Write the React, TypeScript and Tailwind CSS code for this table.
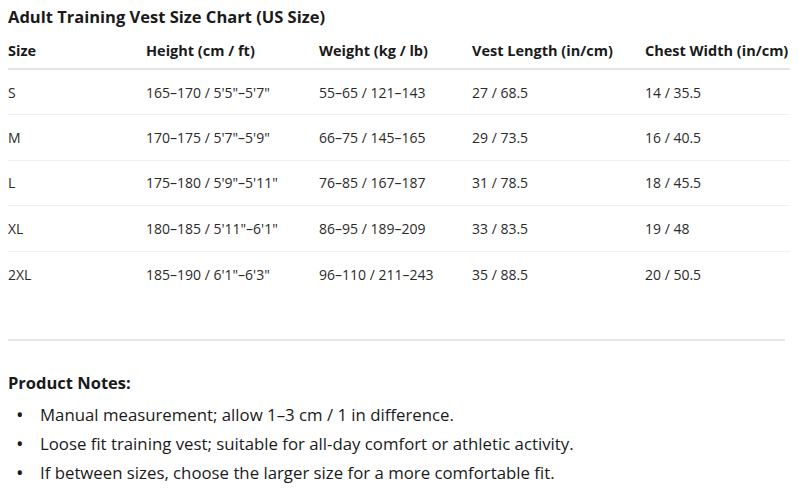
import React from "react";

const rows = [
  ["S", "165–170 / 5'5\"–5'7\"", "55–65 / 121–143", "27 / 68.5", "14 / 35.5"],
  ["M", "170–175 / 5'7\"–5'9\"", "66–75 / 145–165", "29 / 73.5", "16 / 40.5"],
  ["L", "175–180 / 5'9\"–5'11\"", "76–85 / 167–187", "31 / 78.5", "18 / 45.5"],
  ["XL", "180–185 / 5'11\"–6'1\"", "86–95 / 189–209", "33 / 83.5", "19 / 48"],
  ["2XL", "185–190 / 6'1\"–6'3\"", "96–110 / 211–243", "35 / 88.5", "20 / 50.5"],
];

const notes = [
  "Manual measurement; allow 1–3 cm / 1 in difference.",
  "Loose fit training vest; suitable for all-day comfort or athletic activity.",
  "If between sizes, choose the larger size for a more comfortable fit.",
];

export default function App() {
  return (
    <div className="w-[799px] h-[494px] bg-white text-[#1a1a1a] px-2 pt-[7px] font-['Open_Sans',sans-serif]">
      <h1 className="text-[16.5px] font-bold leading-[20px]">Adult Training Vest Size Chart (US Size)</h1>

      <table className="w-[782px] mt-[7px] border-collapse text-[14px]">
        <colgroup>
          <col className="w-[138px]" />
          <col className="w-[173px]" />
          <col className="w-[153px]" />
          <col className="w-[173px]" />
          <col className="w-[145px]" />
        </colgroup>
        <thead>
          <tr className="border-b-2 border-[#e4e4e4] text-[14.5px]">
            <th className="text-left font-bold h-[35px] p-0">Size</th>
            <th className="text-left font-bold p-0">Height (cm / ft)</th>
            <th className="text-left font-bold p-0">Weight (kg / lb)</th>
            <th className="text-left font-bold p-0">Vest Length (in/cm)</th>
            <th className="text-left font-bold p-0 whitespace-nowrap">Chest Width (in/cm)</th>
          </tr>
        </thead>
        <tbody>
          {rows.map((r, i) => (
            <tr key={r[0]} className={i < rows.length - 1 ? "border-b border-[#f0f0f0]" : ""}>
              {r.map((c, j) => (
                <td key={j} className="h-[45.5px] p-0 text-[#2a2a2a] whitespace-nowrap">
                  {c}
                </td>
              ))}
            </tr>
          ))}
        </tbody>
      </table>

      <div className="mt-[42px] mr-[6px] h-[2px] bg-[#e6e6e6]" />

      <h2 className="mt-[32px] text-[16.5px] font-bold leading-[20px]">Product Notes:</h2>
      <ul className="mt-[8px] text-[16.8px] text-[#1a1a1a]">
        {notes.map((n) => (
          <li key={n} className="flex h-[29px] items-center">
            <span className="w-[32px] pl-[8px] text-[20px] leading-none">•</span>
            <span>{n}</span>
          </li>
        ))}
      </ul>
    </div>
  );
}
